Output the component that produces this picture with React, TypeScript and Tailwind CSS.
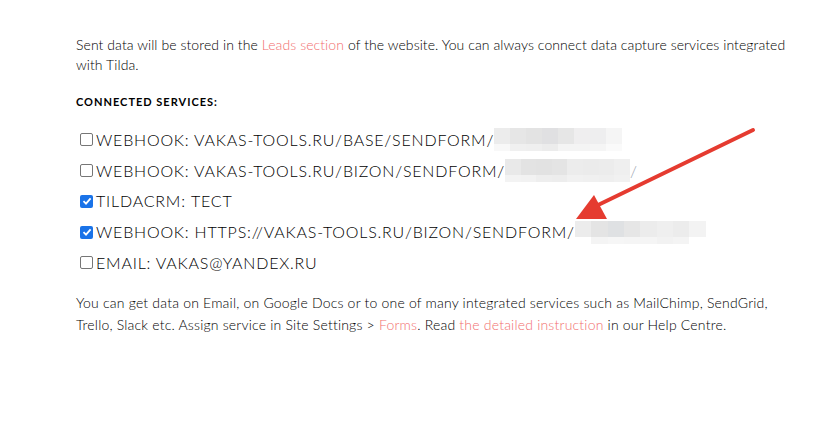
import React from "react";

const font = { fontFamily: "Lato, 'Open Sans', sans-serif" };

function Blur({ w, top, bottom }: { w: number; top: string[]; bottom: string[] }) {
  return (
    <span className="inline-flex flex-col align-middle" style={{ width: w }}>
      <span className="flex h-[16px]">
        {top.map((c, i) => (
          <span key={i} className="flex-1" style={{ background: c }} />
        ))}
      </span>
      <span className="flex h-[7px]">
        {bottom.map((c, i) => (
          <span key={i} className="flex-1" style={{ background: c }} />
        ))}
      </span>
    </span>
  );
}

function Box({ checked }: { checked?: boolean }) {
  if (checked)
    return (
      <span className="inline-flex w-[13px] h-[13px] rounded-[2px] bg-[#1a73e8] items-center justify-center mr-[3px] shrink-0">
        <svg width="10" height="10" viewBox="0 0 10 10">
          <path d="M1.5 5.2 L4 7.6 L8.6 2.4" stroke="white" strokeWidth="1.8" fill="none" />
        </svg>
      </span>
    );
  return <span className="inline-block w-[13px] h-[13px] rounded-[2px] border border-[#767676] bg-white mr-[3px] shrink-0" />;
}

function Row({ checked, children }: { checked?: boolean; children: React.ReactNode }) {
  return (
    <div className="flex items-center h-[30.75px] pl-[4px] text-[16px] tracking-[0.8px] text-black font-light whitespace-nowrap">
      <Box checked={checked} />
      {children}
    </div>
  );
}

export default function App() {
  return (
    <div className="relative w-[816px] h-[438px] bg-white overflow-hidden" style={font}>
      <div className="pt-[35px] pl-[76px]">
        <p className="text-[14px] leading-[20px] font-light tracking-[0.08px] text-black whitespace-nowrap">
          Sent data will be stored in the <span className="text-[#f26e6e]">Leads section</span> of the website. You can always connect data capture services integrated
          <br />
          with Tilda.
        </p>
        <div className="mt-[19px] text-[11px] font-bold tracking-[1px] text-black">CONNECTED SERVICES:</div>
        <div className="mt-[14px]">
          <Row>
            WEBHOOK: VAKAS-TOOLS.RU/BASE/SENDFORM/
            <Blur w={128} top={["#ececec", "#e6e6e6", "#e3e3e3", "#e0e0e2", "#e6e6e6", "#efeeef", "#eeeeef", "#f5f5f5"]} bottom={["#f8f8f8", "#f0f0f0", "#efefef", "#ececec", "#f4f4f4", "#f4f4f4", "#f5f5f5", "#fafafa"]} />
          </Row>
          <Row>
            WEBHOOK: VAKAS-TOOLS.RU/BIZON/SENDFORM/
            <Blur w={125} top={["#e9e9e9", "#e3e3e3", "#e2e2e2", "#e4e4e4", "#ececec", "#ebebeb", "#ececec", "#efefef"]} bottom={["#f3f3f3", "#f2f2f2", "#eeeeee", "#ededed", "#f1f1f1", "#f0f0f0", "#efefef", "#f1f1f1"]} />
            <span className="text-[#9aa3b0]">/</span>
          </Row>
          <Row checked>TILDACRM: ТЕСТ</Row>
          <Row checked>
            WEBHOOK: HTTPS://VAKAS-TOOLS.RU/BIZON/SENDFORM/
            <Blur w={131} top={["#ececec", "#e4e4e4", "#dfe1e3", "#e6e6e6", "#ececec", "#efefef", "#ececec", "#f3f3f3"]} bottom={["#ffffff", "#f4f4f4", "#f6f6f6", "#f5f5f5", "#f5f5f5", "#f2f2f2", "#f4f4f4", "#ffffff"]} />
          </Row>
          <Row>EMAIL: VAKAS@YANDEX.RU</Row>
        </div>
        <p className="mt-[14px] text-[14px] leading-[22px] font-light tracking-[0.2px] text-black whitespace-nowrap">
          You can get data on Email, on Google Docs or to one of many integrated services such as MailChimp, SendGrid,
          <br />
          Trello, Slack etc. Assign service in Site Settings &gt; <span className="text-[#f26e6e]">Forms</span>. Read <span className="text-[#f26e6e]">the detailed instruction</span> in our Help Centre.
        </p>
      </div>
      <svg className="absolute left-0 top-0" width="816" height="438" viewBox="0 0 816 438">
        <line x1="753" y1="130" x2="596" y2="206" stroke="#e53b30" strokeWidth="4" strokeLinecap="round" />
        <polygon points="576,219 594,195 607,219" fill="#e53b30" />
      </svg>
    </div>
  );
}
